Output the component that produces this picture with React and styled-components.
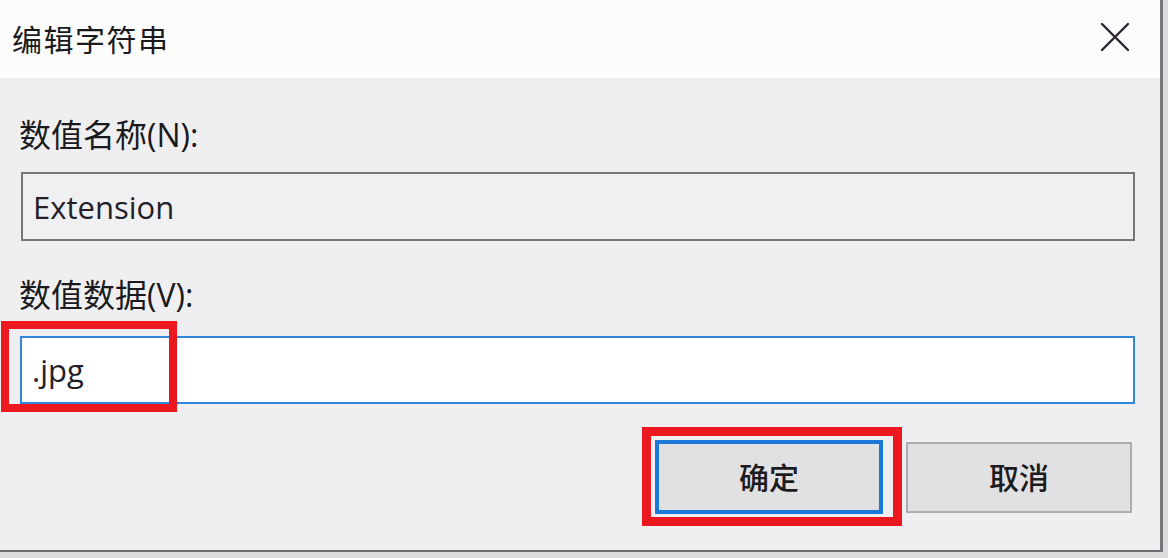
import React from 'react'
import styled, { createGlobalStyle } from 'styled-components'

const GlobalStyle = createGlobalStyle`
  html, body {
    margin: 0;
    padding: 0;
    background: #e4e4e6;
  }
  body {
    font-family: "Open Sans", "Noto Sans CJK SC", sans-serif;
  }
`

const Page = styled.div`
  width: 1168px;
  height: 558px;
  display: flex;
  align-items: flex-start;
  overflow: hidden;
  background: #dcdcde;
`

const Window = styled.div`
  width: 1160px;
  height: 550px;
  display: flex;
  flex-direction: column;
  border-right: 3px solid #77777b;
  border-bottom: 2px solid #6c6c70;
`

const TitleBar = styled.div`
  height: 78px;
  flex-shrink: 0;
  display: flex;
  align-items: center;
  justify-content: space-between;
  padding: 0 30px 0 12px;
  background: #fcfcfd;
  box-shadow: 0 1px 0 #f3f3f5;
`

const Title = styled.h1`
  margin: 0 0 3px;
  font-family: "Noto Sans CJK SC", sans-serif;
  font-size: 30px;
  font-weight: 400;
  letter-spacing: 1.5px;
  color: #1a1a1c;
`

const CloseButton = styled.button`
  width: 30px;
  height: 30px;
  padding: 0;
  margin-bottom: 4px;
  border: 0;
  background: transparent;
  display: flex;
  align-items: center;
  justify-content: center;
`

const Body = styled.div`
  flex: 1;
  background: #efeff1;
  padding: 38px 25px 0 21px;
  display: flex;
  flex-direction: column;
`

const Label = styled.label`
  display: block;
  font-size: 32px;
  line-height: 37px;
  color: #1a1a1e;
  margin: ${({ top }) => top}px 0 0 -2px;
`

const Field = styled.div`
  position: relative;
  margin-top: ${({ top }) => top}px;
  height: ${({ h }) => h}px;
  box-sizing: border-box;
  display: flex;
  align-items: center;
  padding-left: 10px;
  font-size: 31px;
  color: #241e28;
  background: ${({ active }) => (active ? '#ffffff' : '#f0f0f2')};
  border: 2px solid ${({ active }) => (active ? '#2f86da' : '#76767a')};
  margin-left: ${({ shift }) => shift || 0}px;
`

const Highlight = styled.div`
  position: absolute;
  left: ${({ x }) => x}px;
  top: ${({ y }) => y}px;
  width: ${({ w }) => w}px;
  height: ${({ h }) => h}px;
  box-sizing: border-box;
  border: ${({ t }) => t}px solid #ec1820;
  pointer-events: none;
`

const ButtonRow = styled.div`
  margin-top: 36px;
  display: flex;
  justify-content: flex-end;
  align-items: center;
  gap: 23px;
  padding-right: 3px;
`

const ButtonWrap = styled.div`
  position: relative;
`

const DialogButton = styled.button`
  width: ${({ primary }) => (primary ? 228 : 226)}px;
  height: ${({ primary }) => (primary ? 74 : 71)}px;
  box-sizing: border-box;
  background: #e1e1e3;
  border: ${({ primary }) => (primary ? '4px solid #1a78d8' : '2px solid #adadb0')};
  font-family: "Noto Sans CJK SC", sans-serif;
  font-size: 30px;
  font-weight: 500;
  color: #1c1c20;
  padding: 0 0 2px;
`

function CloseIcon () {
  return (
    <svg width='28' height='28' viewBox='0 0 28 28'>
      <path d='M1 1 L27 27 M27 1 L1 27' stroke='#2a2530' strokeWidth='2.4' strokeLinecap='round' />
    </svg>
  )
}

export default function App () {
  return (
    <>
      <GlobalStyle />
      <Page>
        <Window>
          <TitleBar>
            <Title>编辑字符串</Title>
            <CloseButton aria-label='关闭'>
              <CloseIcon />
            </CloseButton>
          </TitleBar>
          <Body>
            <Label top={0}>数值名称(N):</Label>
            <Field top={19} h={69}>Extension</Field>
            <Label top={35}>数值数据(V):</Label>
            <Field top={23} h={68} active shift={-1}>
              .jpg
              <Highlight x={-21} y={-17} w={176} h={91} t={8} />
            </Field>
            <ButtonRow>
              <ButtonWrap>
                <DialogButton primary>确定</DialogButton>
                <Highlight x={-13} y={-13} w={260} h={99} t={9} />
              </ButtonWrap>
              <DialogButton>取消</DialogButton>
            </ButtonRow>
          </Body>
        </Window>
      </Page>
    </>
  )
}
